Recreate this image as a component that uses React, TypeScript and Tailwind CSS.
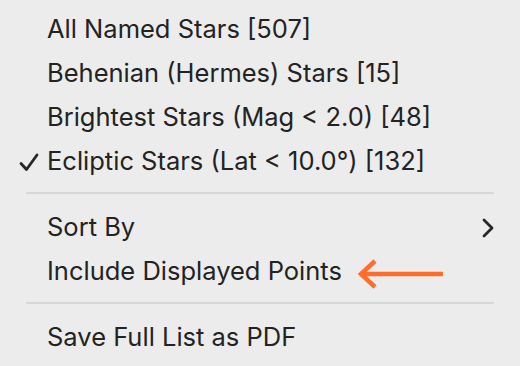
import React from 'react';

type Item = { label: string; checked?: boolean; submenu?: boolean; arrow?: boolean };

const groups: Item[][] = [
  [
    { label: 'All Named Stars [507]' },
    { label: 'Behenian (Hermes) Stars [15]' },
    { label: 'Brightest Stars (Mag < 2.0) [48]' },
    { label: 'Ecliptic Stars (Lat < 10.0°) [132]', checked: true },
  ],
  [
    { label: 'Sort By', submenu: true },
    { label: 'Include Displayed Points', arrow: true },
  ],
  [{ label: 'Save Full List as PDF' }],
];

function Check() {
  return (
    <svg width="20" height="19" viewBox="0 0 20 19" className="absolute left-[19px] top-[14px]">
      <path d="M2 10.5 L7.5 16.5 L18 2" fill="none" stroke="#262626" strokeWidth="2.8" strokeLinecap="round" strokeLinejoin="round" />
    </svg>
  );
}

function Chevron() {
  return (
    <svg width="14" height="20" viewBox="0 0 14 20" className="absolute left-[481px] top-[13px]">
      <path d="M3 2 L11 10 L3 18" fill="none" stroke="#262626" strokeWidth="2.8" strokeLinecap="round" strokeLinejoin="round" />
    </svg>
  );
}

// orange annotation arrow pointing at the item
function Pointer() {
  return (
    <svg width="90" height="30" viewBox="0 0 90 30" className="absolute left-[356px] top-[10px]">
      <path d="M4 15 H87" stroke="#ff6c2c" strokeWidth="4.5" />
      <path d="M19 2 L5 15 L19 28" fill="none" stroke="#ff6c2c" strokeWidth="4.5" />
    </svg>
  );
}

export default function App() {
  return (
    <div
      className="w-[520px] h-[366px] bg-[#ececec] text-[#232323] pt-[7px] overflow-hidden"
      style={{ fontFamily: 'Inter, "Noto Sans", sans-serif' }}
    >
      {groups.map((group, gi) => (
        <div key={gi}>
          {gi > 0 && <div className="mx-[26px] mt-[9px] mb-[11px] h-[2px] bg-[#d6d6d6]" />}
          {group.map((item) => (
            <div key={item.label} className="relative h-[44px] pl-[47px] flex items-center text-[25.5px] leading-[44px]">
              {item.checked && <Check />}
              <span>{item.label}</span>
              {item.submenu && <Chevron />}
              {item.arrow && <Pointer />}
            </div>
          ))}
        </div>
      ))}
    </div>
  );
}
